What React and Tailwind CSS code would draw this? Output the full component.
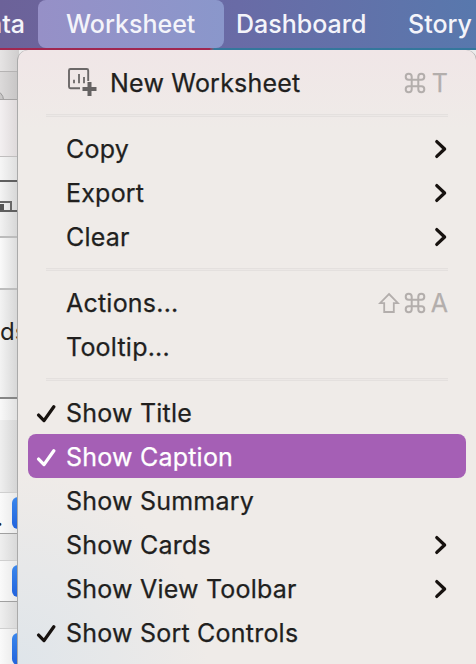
import React from "react";

function Chevron() {
  return (
    <svg width="14" height="20" viewBox="0 0 14 20" className="mt-0.5 shrink-0">
      <path d="M2.8 2.6 L10.6 10 L2.8 17.4" fill="none" stroke="#17120f" strokeWidth="3.3" strokeLinecap="round" strokeLinejoin="round" />
    </svg>
  );
}

function Check() {
  return (
    <svg width="20" height="20" viewBox="0 0 20 20">
      <path d="M2.6 11.1 L8 16.6 L17.8 2.8" fill="none" stroke="currentColor" strokeWidth="3.3" strokeLinecap="round" strokeLinejoin="round" />
    </svg>
  );
}

function Command() {
  return (
    <svg width="22" height="22" viewBox="0 0 22 22" fill="none" stroke="#b3aeac" strokeWidth="2">
      <path d="M7.7 7.7V4.7a3 3 0 1 0-3 3h12.6a3 3 0 1 0-3-3v12.6a3 3 0 1 0 3-3H4.7a3 3 0 1 0 3 3V7.7" />
    </svg>
  );
}

function Shift() {
  return (
    <svg width="22" height="22" viewBox="0 0 22 22" fill="none" stroke="#b3aeac" strokeWidth="1.8">
      <path d="M11 2 L20 11.2 H15.8 V20 H6.2 V11.2 H2 Z" />
    </svg>
  );
}

function SheetIcon() {
  return (
    <svg width="30" height="30" viewBox="0 0 30 30">
      <path d="M13 21.2H3.4Q2 21.2 2 19.8V3.4Q2 2 3.4 2H19.8Q21.2 2 21.2 3.4V14" fill="none" stroke="#6b6868" strokeWidth="1.9" />
      <path d="M7 12.8v3.5M12 7V16.3M17 10v6.3" fill="none" stroke="#6b6868" strokeWidth="1.8" />
      <path d="M15.5 22H29.5M22.5 15V29" fill="none" stroke="#656262" strokeWidth="4" />
    </svg>
  );
}

function Row({ label, checked, submenu, active, icon, keys }) {
  return (
    <div className={"mx-2.5 flex h-11 shrink-0 items-center rounded-lg pl-2 pr-[18px] " + (active ? "bg-[#a55fb5] text-white" : "text-[#211f1e]")}>
      <div className={"flex w-[30px] shrink-0 pt-[3px] " + (active ? "" : "text-[#17120f]")}>{checked && <Check />}</div>
      {icon && <div className="mr-3 w-8 shrink-0 pl-px"><SheetIcon /></div>}
      <span className="pt-[3px] text-[25px] leading-none tracking-[0.22px] whitespace-nowrap [-webkit-text-stroke:0.25px_currentColor]">{label}</span>
      <span className="grow" />
      {submenu && <Chevron />}
      {keys && (
        <span className="flex items-center gap-1 pt-0.5 text-[25px] leading-none text-[#b3aeac]">
          {keys === "A" && <Shift />}
          <Command />
          <span className="w-[18px] pt-px text-right [-webkit-text-stroke:0.25px_currentColor]">{keys}</span>
        </span>
      )}
    </div>
  );
}

function Separator() {
  return (
    <div className="flex h-[22px] shrink-0 items-center px-7 pt-px">
      <div className="h-[3px] grow border-y border-[#e4e0de] bg-[#ece8e6]" />
    </div>
  );
}

function FieldStrip({ label }) {
  return (
    <div className="flex h-[42px] shrink-0 items-center border-y border-t-[#cfcfcf] border-b-[#a0a0a0] bg-linear-to-r from-[#fafafa] to-[#e6e6e6]">
      <div className="w-3 shrink-0 pt-2 text-[25px] leading-none text-[#222]">
        {label && <span className="-ml-1">{label}</span>}
      </div>
      <div className="h-8 w-[7px] shrink-0 rounded-l-md bg-linear-to-b from-[#3b87ec] to-[#2262dc]" />
    </div>
  );
}

export default function App() {
  return (
    <div className="relative h-[664px] w-[476px] overflow-hidden bg-[#ececec] font-['Inter',sans-serif]">
      <div className="flex h-full w-[19px] flex-col">
        <div className="h-[50px] shrink-0" />
        <div className="h-[22px] shrink-0 border-b border-[#b5b3b3] bg-linear-to-r from-[#e6e4e4] to-[#cfcdcd]" />
        <div className="h-7 shrink-0 overflow-hidden border-b border-[#a5a3a3] bg-linear-to-r from-[#dcdada] to-[#c6c4c4]">
          <div className="mt-[18px] -ml-4 h-5 w-5 rounded-full border border-[#999] bg-[#c9c7c7]" />
        </div>
        <div className="h-[57px] shrink-0 border-b border-[#c0bebe] bg-linear-to-r from-[#f3f0f1] to-[#dcd7d8]" />
        <div className="h-[25px] shrink-0 border-b-2 border-[#5f5f5f] bg-linear-to-r from-[#f6f6f6] to-[#dcdcdc]" />
        <div className="flex h-[30px] shrink-0 items-end border-b-2 border-[#5f5f5f] bg-linear-to-r from-[#f4f4f4] to-[#d4d4d4]">
          <div className="flex h-[9px] w-3 items-end border-t-2 border-r-2 border-[#686868]"><div className="h-1.5 w-1 bg-[#555]" /></div>
        </div>
        <div className="h-[26px] shrink-0 border-b-2 border-[#bcbcbc] bg-linear-to-r from-[#f2f2f2] to-[#d4d4d4]" />
        <div className="h-[52px] shrink-0 border-b-2 border-[#bcbcbc] bg-linear-to-r from-[#fafafa] to-[#d9d9d9]" />
        <div className="h-[109px] shrink-0 overflow-hidden border-b-2 border-[#858585] bg-linear-to-r from-[#f3f3f3] to-[#d4d4d4] pt-[30px] text-[24px] leading-none text-[#222]">ds</div>
        <div className="h-[21px] shrink-0 bg-linear-to-r from-[#f9f9f9] to-[#dedede]" />
        <div className="h-[72px] shrink-0 bg-linear-to-r from-[#efefef] to-[#d2d2d2]" />
        <FieldStrip label="." />
        <div className="h-[26px] shrink-0 bg-linear-to-r from-[#efefef] to-[#d6d6d6]" />
        <FieldStrip />
        <div className="h-[26px] shrink-0 bg-linear-to-r from-[#efefef] to-[#d6d6d6]" />
        <FieldStrip />
      </div>

      <div className="absolute inset-x-0 top-0 flex h-[50px] flex-col">
        <div className="flex h-12 shrink-0 items-start bg-linear-to-r from-[#6c6299] via-[#696ba6] to-[#5878ad] text-[25px] leading-[48px] font-medium whitespace-nowrap text-[#f4f4fa]">
          <div className="flex w-[38px] shrink-0 justify-end pr-[13px]">Data</div>
          <div className="h-12 w-[186px] shrink-0 rounded-lg bg-linear-to-r from-[#9690c7] to-[#8a97cb] pl-7">Worksheet</div>
          <div className="w-[184px] shrink-0 pl-3">Dashboard</div>
          <div>Story</div>
        </div>
        <div className="h-0.5 bg-linear-to-r from-[#a02750] from-44% to-[#34779c] to-45%" />
      </div>

      <div className="absolute top-[50px] right-0 bottom-0 left-[18px] flex flex-col rounded-t-[10px] bg-[#efebe8] bg-[radial-gradient(circle_at_0%_100%,#dfe5ea_0px,#efebe800_190px),linear-gradient(to_bottom,#f0e6e7,#efebe8_13%)] pt-2.5 shadow-[0_1px_0_1px_#aaa]">
        <Row label="New Worksheet" icon keys="T" />
        <Separator />
        <Row label="Copy" submenu />
        <Row label="Export" submenu />
        <Row label="Clear" submenu />
        <Separator />
        <Row label="Actions..." keys="A" />
        <Row label="Tooltip..." />
        <Separator />
        <Row label="Show Title" checked />
        <Row label="Show Caption" checked active />
        <Row label="Show Summary" />
        <Row label="Show Cards" submenu />
        <Row label="Show View Toolbar" submenu />
        <Row label="Show Sort Controls" checked />
      </div>
    </div>
  );
}
